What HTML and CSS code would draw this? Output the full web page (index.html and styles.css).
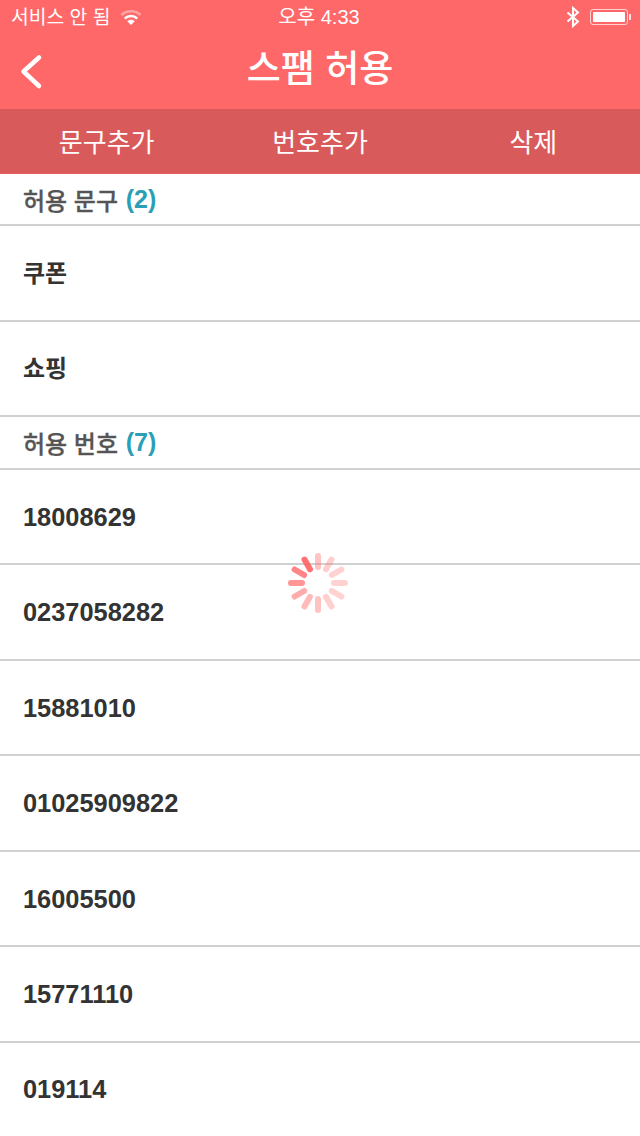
FILE: index.html
```html
<!DOCTYPE html>
<html lang="ko">
<head>
    <meta charset="UTF-8">
    <meta name="viewport" content="width=device-width, initial-scale=1.0">
    <title>스팸 허용</title>
    <link rel="stylesheet" href="styles.css">
</head>
<body>
    <div class="app">
        <div class="statusbar">
            <div class="status-left">
                <span>서비스 안 됨</span>
                <svg class="wifi" width="22" height="17" viewBox="0 0 22 17">
                    <path d="M1.500 6C6.500 1 15.500 1 20.500 6" fill="none" stroke="#fff" stroke-opacity=".4" stroke-width="2.500"/>
                    <path d="M4.800 9.500C8.300 6 13.700 6 17.200 9.500" fill="none" stroke="#fff" stroke-width="2.500"/>
                    <path d="M7.300 12.300C9.500 10.300 12.500 10.300 14.700 12.300L11 16Z" fill="#fff"/>
                </svg>
            </div>
            <div class="status-time">오후 4:33</div>
            <div class="status-right">
                <svg class="bluetooth" width="14" height="22" viewBox="0 0 14 22">
                    <path d="M1.500 6.500L12 15.500L7 20V2L12 6.500L1.500 15.500" fill="none" stroke="#fff" stroke-width="2"/>
                </svg>
                <div class="battery"><div class="battery-fill"></div></div>
                <div class="battery-tip"></div>
            </div>
        </div>

        <div class="header">
            <svg class="back" width="26" height="38" viewBox="0 0 26 38">
                <path d="M21 4.500L5.500 18.500L21 33" fill="none" stroke="#fff" stroke-width="4.500" stroke-linecap="round" stroke-linejoin="round"/>
            </svg>
            <h1>스팸 허용</h1>
        </div>

        <div class="toolbar">
            <div class="tool">문구추가</div>
            <div class="tool">번호추가</div>
            <div class="tool">삭제</div>
        </div>

        <div class="section">허용 문구 <b>(2)</b></div>
        <div class="row row-ko">쿠폰</div>
        <div class="row row-ko">쇼핑</div>

        <div class="section section-numbers">허용 번호 <b>(7)</b></div>
        <div class="row">18008629</div>
        <div class="row">0237058282</div>
        <div class="row">15881010</div>
        <div class="row">01025909822</div>
        <div class="row">16005500</div>
        <div class="row">15771110</div>
        <div class="row row-last">019114</div>

        <svg class="spinner" width="62" height="62" viewBox="-31 -31 62 62">
            <g fill="#ff6868">
                <rect x="-3" y="-30" width="6" height="17" rx="3" opacity=".4"/>
                <rect x="-3" y="-30" width="6" height="17" rx="3" opacity=".32" transform="rotate(30)"/>
                <rect x="-3" y="-30" width="6" height="17" rx="3" opacity=".3" transform="rotate(60)"/>
                <rect x="-3" y="-30" width="6" height="17" rx="3" opacity=".3" transform="rotate(90)"/>
                <rect x="-3" y="-30" width="6" height="17" rx="3" opacity=".3" transform="rotate(120)"/>
                <rect x="-3" y="-30" width="6" height="17" rx="3" opacity=".32" transform="rotate(150)"/>
                <rect x="-3" y="-30" width="6" height="17" rx="3" opacity=".4" transform="rotate(180)"/>
                <rect x="-3" y="-30" width="6" height="17" rx="3" opacity=".45" transform="rotate(210)"/>
                <rect x="-3" y="-30" width="6" height="17" rx="3" opacity=".55" transform="rotate(240)"/>
                <rect x="-3" y="-30" width="6" height="17" rx="3" opacity=".7" transform="rotate(270)"/>
                <rect x="-3" y="-30" width="6" height="17" rx="3" opacity=".8" transform="rotate(300)"/>
                <rect x="-3" y="-30" width="6" height="17" rx="3" opacity=".95" transform="rotate(330)"/>
            </g>
        </svg>
    </div>
</body>
</html>
```

FILE: styles.css
```css
html, body {
    margin: 0;
    padding: 0;
    background: #ffffff;
}

.app {
    position: relative;
    width: 640px;
    height: 1136px;
    overflow: hidden;
    font-family: "Liberation Sans", "Noto Sans CJK KR", sans-serif;
}

.statusbar {
    height: 40px;
    padding: 0 9px 6px 11px;
    box-sizing: border-box;
    background: #ff6868;
    color: #ffffff;
    font-size: 20px;
    display: grid;
    grid-template-columns: 1fr auto 1fr;
    align-items: center;
}

.status-left {
    display: flex;
    align-items: center;
    gap: 10px;
}

.status-left span {
    padding-bottom: 2px;
    font-size: 19.300px;
}

.status-time {
    padding-bottom: 3px;
    margin-right: 4px;
}

.status-right {
    display: flex;
    align-items: center;
    justify-content: flex-end;
}

.bluetooth {
    margin-right: 10px;
}

.battery {
    width: 38px;
    height: 16px;
    padding: 2px;
    box-sizing: border-box;
    border: 1px solid rgba(255, 255, 255, 0.7);
    border-radius: 3px;
}

.battery-fill {
    height: 100%;
    background: #ffffff;
    border-radius: 1px;
}

.battery-tip {
    width: 2px;
    height: 6px;
    margin-left: 1px;
    background: rgba(255, 255, 255, 0.8);
}

.header {
    height: 69px;
    background: #ff6868;
    display: flex;
    align-items: center;
    justify-content: center;
    position: relative;
}

.header h1 {
    margin: 0 0 10px;
    color: #ffffff;
    font-size: 37px;
    font-weight: 500;
    line-height: 1;
}

.back {
    position: absolute;
    left: 18px;
    top: 13px;
}

.toolbar {
    height: 65px;
    padding-bottom: 2px;
    box-sizing: border-box;
    background: #d95a5a;
    border-bottom: 1px solid #e45f5f;
    display: grid;
    grid-template-columns: repeat(3, 1fr);
    align-items: center;
    text-align: center;
    color: #ffffff;
    font-size: 26px;
}

.section {
    height: 52px;
    padding: 0 23px;
    box-sizing: border-box;
    border-bottom: 2px solid #d0d0d0;
    display: flex;
    align-items: center;
    white-space: pre;
    color: #555555;
    font-size: 24px;
    font-weight: 500;
    -webkit-text-stroke: 0.3px #555555;
}

.section-numbers {
    height: 52.900px;
}

.section b {
    margin-left: 1px;
    color: #2a9fb5;
    font-size: 25px;
    font-weight: bold;
    -webkit-text-stroke: 0;
}

.row {
    height: 95.500px;
    padding: 1px 23px 0;
    box-sizing: border-box;
    border-bottom: 2px solid #d0d0d0;
    display: flex;
    align-items: center;
    color: #333333;
    font-size: 25.400px;
    font-weight: bold;
}

.row-ko {
    padding: 0 23px 3px;
    font-size: 24px;
}

.row-last {
    padding-top: 0;
    border-bottom-color: transparent;
}

.spinner {
    position: absolute;
    left: 287px;
    top: 552px;
}
```
